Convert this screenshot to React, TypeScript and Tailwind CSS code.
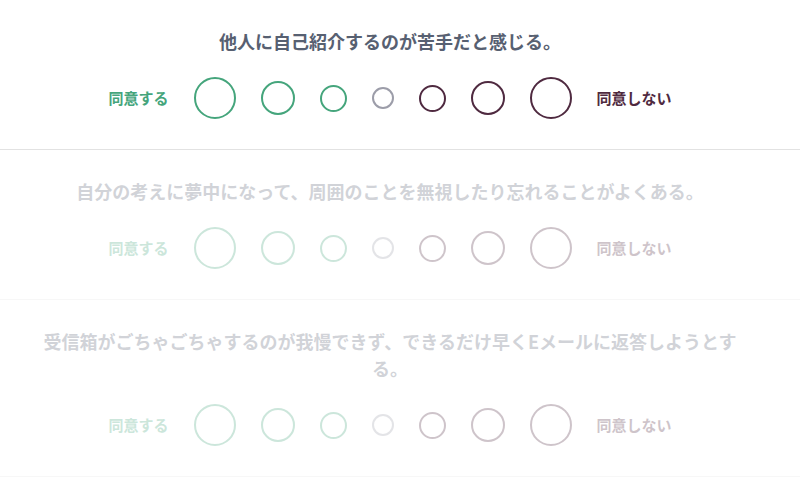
import { useState } from "react";

const questions = [
  "他人に自己紹介するのが苦手だと感じる。",
  "自分の考えに夢中になって、周囲のことを無視したり忘れることがよくある。",
  "受信箱がごちゃごちゃするのが我慢できず、できるだけ早くEメールに返答しようとする。",
];

// left = agree (green), right = disagree (maroon)
const options = [
  { size: "w-[42px] h-[42px]", color: "border-[#45a57c]" },
  { size: "w-[34px] h-[34px]", color: "border-[#45a57c]" },
  { size: "w-[27px] h-[27px]", color: "border-[#45a57c]" },
  { size: "w-[22px] h-[22px]", color: "border-[#9c9da9]" },
  { size: "w-[27px] h-[27px]", color: "border-[#4f2a40]" },
  { size: "w-[34px] h-[34px]", color: "border-[#4f2a40]" },
  { size: "w-[42px] h-[42px]", color: "border-[#4f2a40]" },
];

export default function App() {
  const [answers, setAnswers] = useState<(number | null)[]>(questions.map(() => null));

  return (
    <div className="w-full min-h-[500px] bg-white font-['Noto_Sans_CJK_JP','Noto_Sans',sans-serif]">
      {questions.map((q, qi) => (
        <div
          key={qi}
          className={`border-b border-[#e2e2e2] pt-[28px] pb-[30px] ${qi === 0 ? "" : "opacity-[0.27]"}`}
        >
          <div className="w-[780px]">
            <h2 className="mx-auto max-w-[700px] text-center text-[18px] leading-[27px] font-bold text-[#576071]">
              {q}
            </h2>
            <div className="mt-[22px] flex items-center justify-center h-[42px]">
              <span className="w-[60px] text-[15px] leading-[20px] font-bold text-[#45a57c]">同意する</span>
              <div className="mx-[25px] flex items-center gap-[25px]">
                {options.map((o, oi) => (
                  <button
                    key={oi}
                    onClick={() =>
                      setAnswers((a) => a.map((v, i) => (i === qi ? oi : v)))
                    }
                    className={`${o.size} ${o.color} shrink-0 rounded-full border-2 ${
                      answers[qi] === oi ? "bg-gray-100" : "bg-white"
                    }`}
                  />
                ))}
              </div>
              <span className="w-[75px] text-[15px] leading-[20px] font-bold text-[#4f2a40]">同意しない</span>
            </div>
          </div>
        </div>
      ))}
    </div>
  );
}
